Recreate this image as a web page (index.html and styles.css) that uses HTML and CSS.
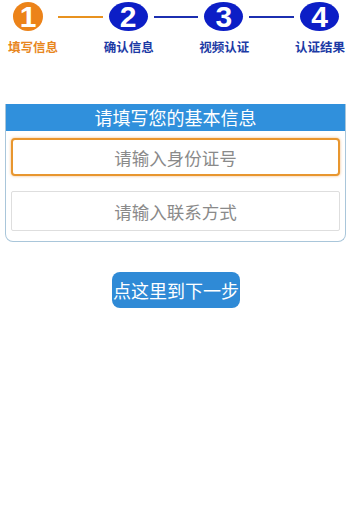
FILE: index.html
```html
<!DOCTYPE html>
<html lang="zh-CN">
<head>
    <meta charset="UTF-8">
    <meta name="viewport" content="width=device-width, initial-scale=1">
    <title>填写信息</title>
    <link rel="stylesheet" href="styles.css">
</head>
<body>
    <div class="steps">
        <div class="step-row">
            <span class="num first">1</span>
            <span class="link first-link"></span>
            <span class="num">2</span>
            <span class="link"></span>
            <span class="num">3</span>
            <span class="link"></span>
            <span class="num">4</span>
        </div>
        <div class="label-row">
            <span class="label active">填写信息</span>
            <span class="label">确认信息</span>
            <span class="label">视频认证</span>
            <span class="label">认证结果</span>
        </div>
    </div>

    <div class="card">
        <div class="card-title">请填写您的基本信息</div>
        <div class="card-body">
            <input type="text" class="field focus" placeholder="请输入身份证号">
            <input type="text" class="field" placeholder="请输入联系方式">
        </div>
    </div>

    <div class="button-group">
        <button type="button" class="btn-next">点这里到下一步</button>
    </div>
</body>
</html>
```

FILE: styles.css
```css
body {
    margin: 0;
    font-family: "Noto Sans CJK SC", "Noto Sans", sans-serif;
    background: #fff;
}
.steps {
    padding-top: 2px;
}
.step-row {
    display: flex;
    align-items: center;
    padding: 0 13px;
    height: 29px;
}
.num {
    width: 39px;
    height: 29px;
    border-radius: 50%;
    background: #0c1ec6;
    color: #fff;
    font-family: "Liberation Sans", Arial, sans-serif;
    font-weight: bold;
    font-size: 30px;
    line-height: 30px;
    text-align: center;
    flex-shrink: 0;
}
.num.first {
    width: 30px;
    background: #ec8319;
}
.link {
    flex: 1;
    height: 2px;
    margin: 0 6px;
    background: #1c2fb0;
}
.link.first-link {
    margin-left: 15px;
    background: #e8921f;
}
.label-row {
    display: flex;
    justify-content: space-between;
    padding: 0 7px 0 8px;
    margin-top: 7px;
}
.label {
    width: 50px;
    font-size: 12.5px;
    font-weight: bold;
    line-height: 18px;
    color: #1c3aa5;
    white-space: nowrap;
}
.label.active {
    color: #e8871e;
}
.card {
    margin: 48px 6px 0 5px;
    border: 1px solid #a9c6da;
    border-top: none;
    border-radius: 0 0 8px 8px;
}
.card-title {
    height: 27px;
    line-height: 27px;
    background: #3090dc;
    color: #fff;
    font-size: 18px;
    text-align: center;
}
.card-body {
    padding: 7px 5px 10px 5px;
}
.field {
    display: block;
    box-sizing: border-box;
    width: 100%;
    height: 40px;
    border: 1px solid #dedede;
    border-radius: 2px;
    background: #fff;
    font-family: "Noto Sans CJK SC", sans-serif;
    font-size: 17.5px;
    text-align: center;
    outline: none;
}
.field::placeholder {
    color: #8a8a8a;
}
.field.focus {
    height: 38px;
    border: 2px solid #e8962e;
    border-radius: 4px;
    box-shadow: 0 0 3px rgba(232, 140, 40, 0.6);
    margin-bottom: 15px;
}
.button-group {
    display: flex;
    justify-content: center;
    margin-top: 30px;
}
.btn-next {
    height: 36px;
    padding: 0 1px;
    border: none;
    border-radius: 8px;
    background: #2f8ad6;
    color: #fff;
    font-family: "Noto Sans CJK SC", sans-serif;
    font-size: 18px;
    cursor: pointer;
}
```
